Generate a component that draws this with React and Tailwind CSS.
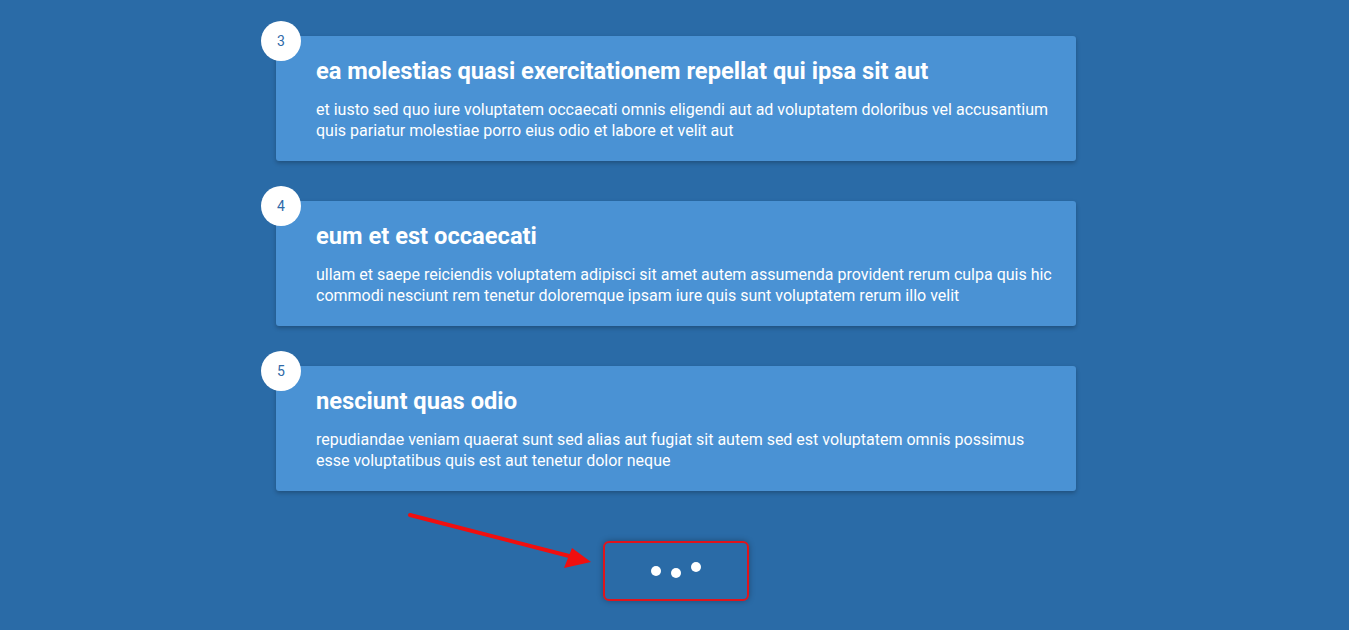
import React from 'react';

const posts = [
    {
        id: 3,
        title: 'ea molestias quasi exercitationem repellat qui ipsa sit aut',
        body: 'et iusto sed quo iure voluptatem occaecati omnis eligendi aut ad voluptatem doloribus vel accusantium quis pariatur molestiae porro eius odio et labore et velit aut',
    },
    {
        id: 4,
        title: 'eum et est occaecati',
        body: 'ullam et saepe reiciendis voluptatem adipisci sit amet autem assumenda provident rerum culpa quis hic commodi nesciunt rem tenetur doloremque ipsam iure quis sunt voluptatem rerum illo velit',
    },
    {
        id: 5,
        title: 'nesciunt quas odio',
        body: 'repudiandae veniam quaerat sunt sed alias aut fugiat sit autem sed est voluptatem omnis possimus esse voluptatibus quis est aut tenetur dolor neque',
    },
];

const Post = ({ post }) => (
    <div className="relative h-[125px] bg-[#4a92d4] rounded-[3px] shadow-[0_2px_4px_rgba(0,0,0,0.25)] pl-10 pr-6 pt-5">
        <div className="absolute -left-[15px] -top-[15px] w-10 h-10 rounded-full bg-white flex items-center justify-center text-[14px] text-[#2f6aa8]">
            {post.id}
        </div>
        <h2 className="text-[23.7px] leading-[30px] font-bold text-white">{post.title}</h2>
        <p className="mt-[13px] text-[16px] leading-[21px] text-white">{post.body}</p>
    </div>
);

export default function App() {
    return (
        <div className="relative min-h-[630px] bg-[#2a6ba7] overflow-hidden font-['Roboto',sans-serif]">
            <div className="w-[803px] mx-auto pl-[3px] pt-9">
                <div className="flex flex-col gap-10">
                    {posts.map((p) => (
                        <Post key={p.id} post={p} />
                    ))}
                </div>

                <div className="flex justify-center mt-[50px]">
                    <div className="w-[146px] h-[60px] border-2 border-[#e0141b] rounded-[6px] flex items-center justify-center gap-[10px] shadow-[0_0_6px_rgba(0,0,0,0.3)]">
                        <span className="w-[10px] h-[10px] rounded-full bg-white -mt-[1px]" />
                        <span className="w-[10px] h-[10px] rounded-full bg-white mt-[3px]" />
                        <span className="w-[10px] h-[10px] rounded-full bg-white -mt-[9px]" />
                    </div>
                </div>
            </div>

            {/* annotation arrow */}
            <svg className="absolute left-[401px] top-[506px]" width="200" height="70" viewBox="0 0 200 70">
                <line x1="9" y1="9" x2="172" y2="51" stroke="#f00f0f" strokeWidth="4" strokeLinecap="round" />
                <polygon points="190,56 163,62 171,42" fill="#f00f0f" />
            </svg>
        </div>
    );
}
